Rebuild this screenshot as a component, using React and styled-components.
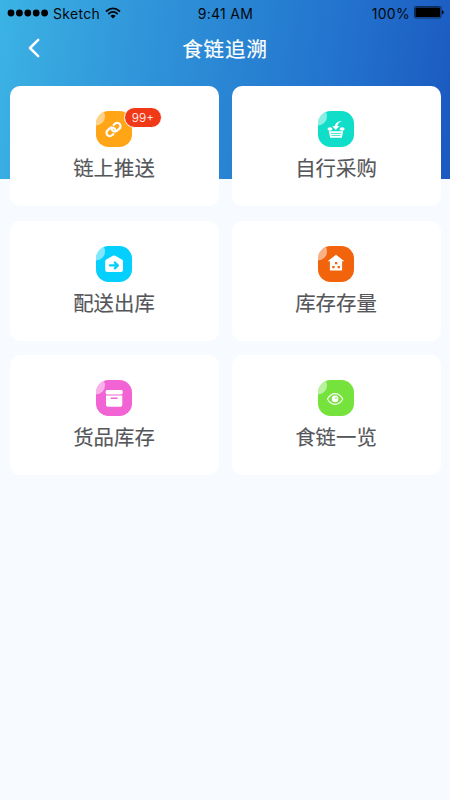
import React from "react";
import styled, { createGlobalStyle } from "styled-components";

const GlobalStyle = createGlobalStyle`
  * { box-sizing: border-box; }
  body {
    margin: 0;
    background: #f7faff;
    font-family: "Inter", "Noto Sans CJK SC", sans-serif;
  }
`;

const Page = styled.div`
  width: 450px;
  height: 800px;
  overflow: hidden;
  background: #f7faff;
`;

const Header = styled.header`
  height: 179px;
  background: linear-gradient(98deg, #3bb3e4 0%, #339cdc 23%, #2a87d4 48%, #2272cd 74%, #1b59c0 100%);
`;

const StatusBar = styled.div`
  height: 26px;
  display: grid;
  grid-template-columns: 1fr auto 1fr;
  padding: 0 6px 0 7px;
  color: #05080c;
  font-size: 14px;
  line-height: 27px;
`;

const StatusGroup = styled.div`
  display: flex;
  height: 25px;
  align-items: center;
  justify-content: ${(props) => (props.$end ? "flex-end" : "flex-start")};
`;

const Carrier = styled.span`
  margin: 2px 5px 0 4px;
  letter-spacing: 0.3px;
`;

const Clock = styled.span`
  font-size: 14px;
  letter-spacing: 0.3px;
`;

const Percent = styled.span`
  margin: 2px 4px 0 0;
  letter-spacing: 0.3px;
`;

const NavBar = styled.div`
  height: 44px;
  display: grid;
  grid-template-columns: 68px 1fr 68px;
  align-items: center;
`;

const BackButton = styled.button`
  height: 44px;
  border: 0;
  padding: 0;
  background: none;
  display: flex;
  align-items: center;
  justify-content: center;
`;

const Title = styled.h1`
  margin: 0;
  color: #fff;
  font-family: "Noto Sans CJK SC", sans-serif;
  font-size: 20.5px;
  font-weight: 400;
  -webkit-text-stroke: 0.2px #fff;
  letter-spacing: 0.9px;
  line-height: 44px;
  text-align: center;
`;

const Menu = styled.main`
  display: grid;
  grid-template-columns: 209px 209px;
  grid-auto-rows: 120px;
  gap: 14.3px 13px;
  margin-top: -92.7px;
  padding: 0 9.5px;
`;

const Card = styled.div`
  display: flex;
  flex-direction: column;
  align-items: center;
  padding-top: 25px;
  background: #fff;
  border-radius: 10px;
`;

const IconTile = styled.div`
  position: relative;
  width: 36px;
  height: 36px;
`;

const Badge = styled.span`
  position: absolute;
  left: 28px;
  top: -4.3px;
  width: 38px;
  height: 21px;
  border: 1px solid #fff;
  border-radius: 11px;
  background: #f03a17;
  color: #fff;
  font-size: 12px;
  font-weight: 300;
  line-height: 20px;
  text-align: center;
`;

const Label = styled.span`
  margin-top: 5px;
  color: #55565a;
  font-family: "Noto Sans CJK SC", sans-serif;
  font-size: 20.4px;
  font-weight: 400;
  -webkit-text-stroke: 0.15px #55565a;
  line-height: 30px;
`;

const LinkIcon = () => (
  <g transform="translate(17.5 18.5) rotate(-42)" fill="none" stroke="#fff" strokeWidth="2.2" strokeLinecap="round">
    <path d="M-3.2 3.3H-5A3.3 3.3 0 0 1 -5 -3.3H-1.9A3.3 3.3 0 0 1 1.4 0A3.3 3.3 0 0 1 .8 1.9" />
    <path d="M3.2 -3.3H5A3.3 3.3 0 0 1 5 3.3H1.9A3.3 3.3 0 0 1 -1.4 0A3.3 3.3 0 0 1 -.8 -1.9" />
  </g>
);

const BasketIcon = () => (
  <g fill="#fff">
    <path d="M24.2 10.1C20.6 10 17.4 11.8 16.9 15.1H14.2L17.8 18.9L21.6 15.1H19.4C19.7 12.8 21.2 10.9 24.2 10.1Z" />
    <ellipse cx="12" cy="18" rx="2.5" ry="1.7" />
    <ellipse cx="24.1" cy="18" rx="2.5" ry="1.7" />
    <path fillRule="evenodd" d="M10.8 20.2H25.2L23.8 26.8H12.2ZM13 21.9V22.7H23V21.9ZM13.5 24.2V25H22.5V24.2Z" />
  </g>
);

const DispatchIcon = () => (
  <>
    <path d="M16.8 9.8Q18 9.1 19.2 9.8L25.9 13.5Q27 14.2 27 15.4V24Q27 26 25 26H11.2Q9.2 26 9.2 24V15.4Q9.2 14.2 10.3 13.5Z" fill="#fff" />
    <path d="M14 19.4H21M18.8 16.5L21.8 19.4L18.8 22.3" fill="none" stroke="#05cffd" strokeWidth="2.3" strokeLinecap="round" strokeLinejoin="round" />
  </>
);

const StockIcon = () => (
  <>
    <path d="M18 8.8L26.4 15.3H24.1V24.6H11.9V15.3H9.6Z" fill="#fff" />
    <path d="M17 16h2.3v2.2H17zM14.3 20h2.3v2.2h-2.3zM19.6 20h2.3v2.2h-2.3z" fill="#f2640c" />
  </>
);

const GoodsIcon = () => (
  <>
    <rect x="9.7" y="10" width="17" height="4.5" rx="1.4" fill="#fff" />
    <path d="M10 15.6H26.3V25Q26.3 26.8 24.5 26.8H11.8Q10 26.8 10 25Z" fill="#fff" />
    <path d="M15.3 18.3H21.1" stroke="#f263d3" strokeWidth="1.5" strokeLinecap="round" />
  </>
);

const EyeIcon = () => (
  <>
    <path d="M9.4 19C13.5 11.8 20.7 11.8 24.8 19C20.7 26.2 13.5 26.2 9.4 19Z" fill="none" stroke="#fff" strokeWidth="1.1" strokeLinejoin="round" />
    <circle cx="17.1" cy="18.9" r="3.3" fill="#fff" />
    <circle cx="18" cy="18" r="0.8" fill="#72e33b" />
  </>
);

const items = [
  { name: "链上推送", color: "#ffa516", icon: LinkIcon, badge: "99+" },
  { name: "自行采购", color: "#11dec8", icon: BasketIcon },
  { name: "配送出库", color: "#05cffd", icon: DispatchIcon },
  { name: "库存存量", color: "#f2640c", icon: StockIcon },
  { name: "货品库存", color: "#f263d3", icon: GoodsIcon },
  { name: "食链一览", color: "#75e33c", icon: EyeIcon },
];

function MenuCard({ id, item }) {
  const Icon = item.icon;
  return (
    <Card>
      <IconTile>
        <svg width="36" height="36" viewBox="0 0 36 36" display="block">
          <clipPath id={id}>
            <rect width="36" height="36" rx="12.5" />
          </clipPath>
          <g clipPath={`url(#${id})`}>
            <rect width="36" height="36" fill={item.color} />
            <circle cx="0" cy="5.5" r="9" fill="#fff" fillOpacity="0.5" />
          </g>
          <Icon />
        </svg>
        {item.badge && <Badge>{item.badge}</Badge>}
      </IconTile>
      <Label>{item.name}</Label>
    </Card>
  );
}

function App() {
  return (
    <Page>
      <GlobalStyle />
      <Header>
        <StatusBar>
          <StatusGroup>
            <svg width="42" height="8" viewBox="0 0 42 8">
              {[4, 12.4, 20.8, 29.2, 37.6].map((x) => (
                <circle key={x} cx={x} cy="4" r="3.4" />
              ))}
            </svg>
            <Carrier>Sketch</Carrier>
            <svg width="16" height="12" viewBox="0 0 16 12">
              <path d="M1 4.5Q8 -1.8 15 4.5M3.3 7Q8 2.8 12.7 7" fill="none" stroke="#05080c" strokeWidth="1.7" />
              <path d="M5.4 8.9Q8 6.8 10.6 8.9L8 11.6Z" />
            </svg>
          </StatusGroup>
          <Clock>9:41 AM</Clock>
          <StatusGroup $end>
            <Percent>100%</Percent>
            <svg width="30" height="13" viewBox="0 0 30 13">
              <rect x=".5" y=".5" width="26.5" height="11.5" rx="1.3" fill="none" stroke="#0c2c5b" />
              <rect x="1.4" y="1.4" width="24.7" height="9.7" rx=".6" />
              <path d="M28 4.2Q29.7 4.7 29.7 6.3T28 8.4Z" />
            </svg>
          </StatusGroup>
        </StatusBar>
        <NavBar>
          <BackButton aria-label="返回">
            <svg width="12" height="20" viewBox="0 0 12 20">
              <path d="M10.2 1.8L2 10L10.2 18.2" fill="none" stroke="#fff" strokeWidth="2.5" strokeLinecap="round" strokeLinejoin="round" />
            </svg>
          </BackButton>
          <Title>食链追溯</Title>
        </NavBar>
      </Header>
      <Menu>
        {items.map((item, i) => (
          <MenuCard key={item.name} id={`tile-${i}`} item={item} />
        ))}
      </Menu>
    </Page>
  );
}

export default App;
